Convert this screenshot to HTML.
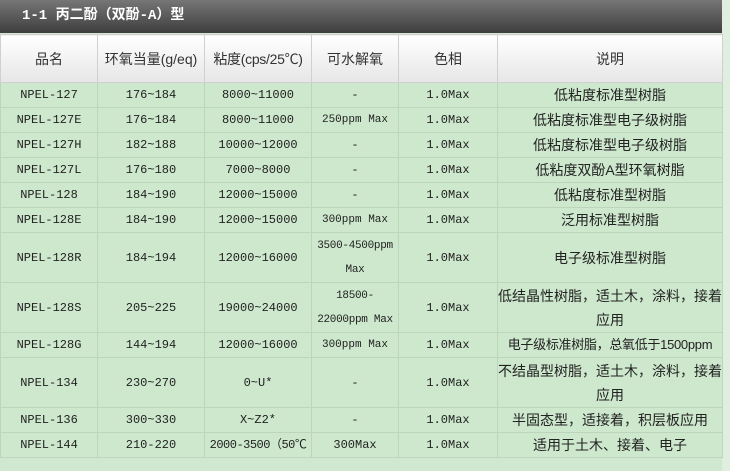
<!DOCTYPE html>
<html><head><meta charset="utf-8"><style>
body{margin:0;width:730px;height:471px;background:#cfe8cf;overflow:hidden;font-family:"Liberation Mono","Noto Sans CJK SC",monospace;}
.hd{position:absolute;left:0;top:0;width:722px;height:33px;background:linear-gradient(#767676,#3e3e3e);color:#fff;font:bold 14px "Liberation Mono","Noto Sans CJK SC",monospace;line-height:33px;padding-left:22px;box-sizing:border-box;}
.edge{position:absolute;left:722px;top:0;width:8px;height:471px;background:#dfeedf}
table{position:absolute;left:0;top:34px;border-collapse:collapse;width:722px;table-layout:fixed;}
td{border:1px solid #bcd6bc;text-align:center;font-size:12px;color:#222;padding:0;line-height:24px;background:#cde8cd;white-space:nowrap;overflow:hidden;}
th{border:1px solid #d0d0d0;font:14px "Liberation Sans","Noto Sans CJK SC",sans-serif;color:#333;font-weight:normal;height:47px;background:linear-gradient(#fff,#e6e6e6);white-space:nowrap;overflow:hidden;padding:0}
td.c{font-family:"Liberation Sans","Noto Sans CJK SC",sans-serif;font-size:14px;letter-spacing:0}
tr.r td{height:24px}
tr.t td{height:49px}
</style></head><body>
<div class="hd">1-1 丙二酚（双酚-A）型</div>
<div class="edge"></div>
<table>
<colgroup><col style="width:97px"><col style="width:107px"><col style="width:107px"><col style="width:87px"><col style="width:99px"><col style="width:225px"></colgroup>
<tr><th>品名</th><th>环氧当量(g/eq)</th><th style="letter-spacing:-0.3px">粘度(cps/25℃)</th><th>可水解氧</th><th>色相</th><th>说明</th></tr>
<tr class="r"><td>NPEL-127</td><td>176~184</td><td>8000~11000</td><td>-</td><td>1.0Max</td><td class="c">低粘度标准型树脂</td></tr>
<tr class="r"><td>NPEL-127E</td><td>176~184</td><td>8000~11000</td><td style="font-size:11px">250ppm Max</td><td>1.0Max</td><td class="c">低粘度标准型电子级树脂</td></tr>
<tr class="r"><td>NPEL-127H</td><td>182~188</td><td>10000~12000</td><td>-</td><td>1.0Max</td><td class="c">低粘度标准型电子级树脂</td></tr>
<tr class="r"><td>NPEL-127L</td><td>176~180</td><td>7000~8000</td><td>-</td><td>1.0Max</td><td class="c">低粘度双酚A型环氧树脂</td></tr>
<tr class="r"><td>NPEL-128</td><td>184~190</td><td>12000~15000</td><td>-</td><td>1.0Max</td><td class="c">低粘度标准型树脂</td></tr>
<tr class="r"><td>NPEL-128E</td><td>184~190</td><td>12000~15000</td><td style="font-size:11px">300ppm Max</td><td>1.0Max</td><td class="c">泛用标准型树脂</td></tr>
<tr class="t"><td>NPEL-128R</td><td>184~194</td><td>12000~16000</td><td style="font-size:11px;letter-spacing:-0.3px">3500-4500ppm<br>Max</td><td>1.0Max</td><td class="c">电子级标准型树脂</td></tr>
<tr class="t"><td>NPEL-128S</td><td>205~225</td><td>19000~24000</td><td style="font-size:11px;letter-spacing:-0.3px">18500-<br>22000ppm Max</td><td>1.0Max</td><td class="c">低结晶性树脂，适土木，涂料，接着<br>应用</td></tr>
<tr class="r"><td>NPEL-128G</td><td>144~194</td><td>12000~16000</td><td style="font-size:11px">300ppm Max</td><td>1.0Max</td><td class="c" style="font-size:13px;letter-spacing:-0.3px">电子级标准树脂，总氧低于1500ppm</td></tr>
<tr class="t"><td>NPEL-134</td><td>230~270</td><td>0~U*</td><td>-</td><td>1.0Max</td><td class="c">不结晶型树脂，适土木，涂料，接着<br>应用</td></tr>
<tr class="r"><td>NPEL-136</td><td>300~330</td><td>X~Z2*</td><td>-</td><td>1.0Max</td><td class="c">半固态型，适接着，积层板应用</td></tr>
<tr class="r"><td>NPEL-144</td><td>210-220</td><td style="letter-spacing:-0.5px">2000-3500（50℃</td><td>300Max</td><td>1.0Max</td><td class="c">适用于土木、接着、电子</td></tr>
</table>
</body></html>
